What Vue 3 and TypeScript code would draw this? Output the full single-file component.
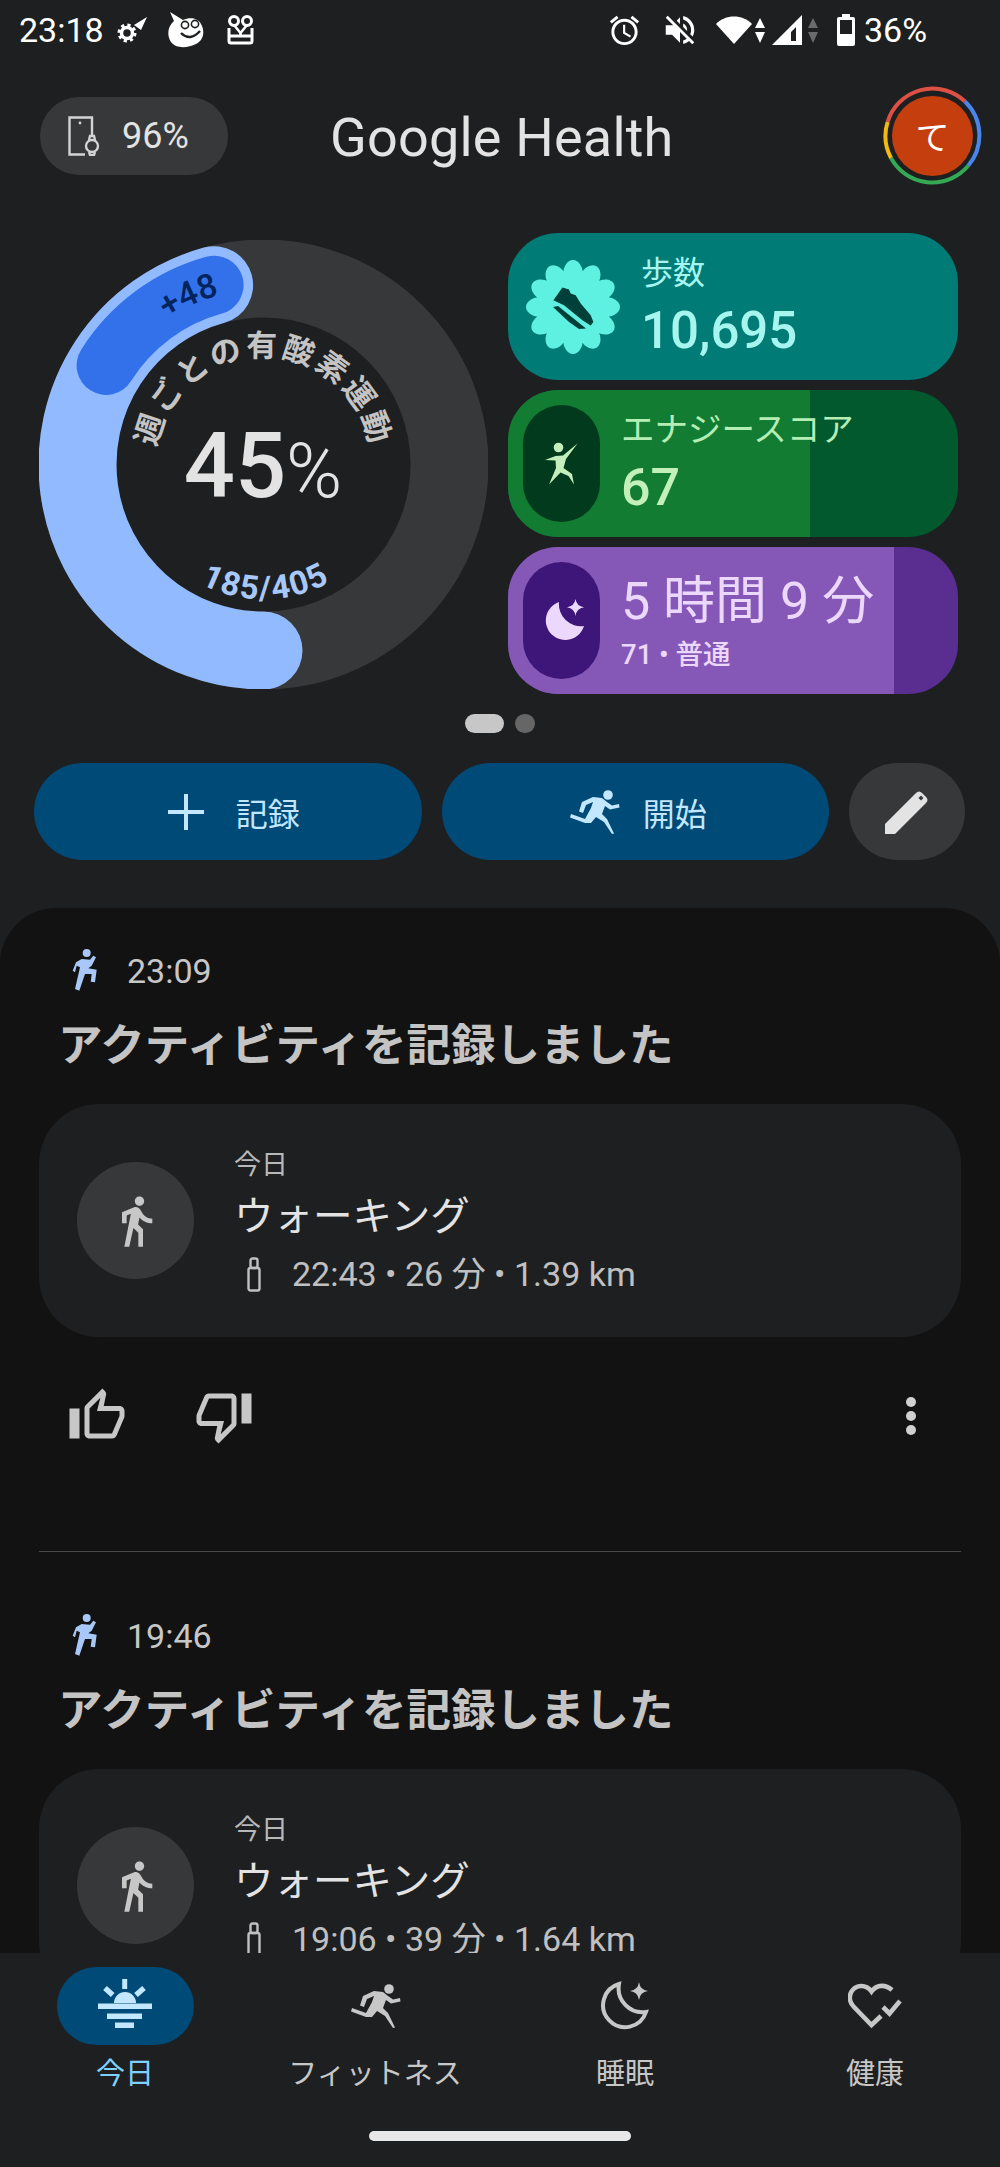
<script setup lang="ts">
interface Entry {
  id: number
  time: string
  detail: string
}

const entries: Entry[] = [
  { id: 1, time: '23:09', detail: '22:43 • 26 分 • 1.39 km' },
  { id: 2, time: '19:46', detail: '19:06 • 39 分 • 1.64 km' },
]

// runner used on the start button and the fitness tab (51x44 box)
const RUN =
  'M24 7 L33 8 L38 12 L43 15.5 L50 14 L50.5 17.5 L41 19.5 L36 16 L33 24 L38 29 L45 43.5 L43 44 L35 32 L27 27 L22 33 L16 33 L1 27.5 L2 24 L16 29 L22 18 L24 12 L17 15 L14 23 L10 21.5 L13 12 Z'

// ring geometry, angles in degrees clockwise from the top
const C = 224.5
const pt = (r: number, deg: number) => {
  const a = (deg * Math.PI) / 180
  return `${(C + r * Math.sin(a)).toFixed(2)} ${(C - r * Math.cos(a)).toFixed(2)}`
}
const arc = (r: number, from: number, to: number) => {
  const large = Math.abs(to - from) > 180 ? 1 : 0
  const sweep = to > from ? 1 : 0
  return `M${pt(r, from)} A${r} ${r} 0 ${large} ${sweep} ${pt(r, to)}`
}

const goalArc = arc(186, 180, 344.6)
const extraArc = arc(186, 302.2, 344.6)
const titlePath = arc(108, -100, 100)
const extraPath = arc(175, -94, 46)
const countPath = arc(135, 259, 99)

// scalloped badge behind the shoe
const badge = (() => {
  const pts: string[] = []
  for (let i = 0; i < 240; i++) {
    const t = (i / 240) * Math.PI * 2
    const r = 37 + 10 * Math.pow(Math.abs(Math.cos(6 * t)), 0.8)
    pts.push(`${(47 + r * Math.sin(t)).toFixed(2)} ${(47 - r * Math.cos(t)).toFixed(2)}`)
  }
  return 'M' + pts.join('L') + 'Z'
})()
</script>

<template>
  <div class="screen">
    <div class="status">
      <span class="status-time">23:18</span>
      <svg class="s-gear" width="30" height="26" viewBox="0 0 30 26">
        <path d="M17 8 L30 0 L24 13 Z" fill="#fff" />
        <circle cx="10" cy="16" r="5.5" fill="none" stroke="#fff" stroke-width="3.5" />
        <circle cx="10" cy="16" r="8" fill="none" stroke="#fff" stroke-width="3" stroke-dasharray="3.2 3.1" />
      </svg>
      <svg class="s-slime" width="36" height="36" viewBox="0 0 36 36">
        <path d="M2 0 L15 8 C22 5 30 6 33 12 C37 19 36 28 28 32 C20 36 8 37 3 30 C-1 24 -1 15 6 9 Z" fill="#fff" />
        <circle cx="17" cy="13" r="3.6" fill="none" stroke="#1e1f20" stroke-width="1.6" />
        <circle cx="27" cy="12" r="3.6" fill="none" stroke="#1e1f20" stroke-width="1.6" />
        <path d="M13 21 Q22 30 32 19" fill="none" stroke="#1e1f20" stroke-width="2.4" />
      </svg>
      <svg class="s-bunny" width="29" height="30" viewBox="0 0 29 30">
        <circle cx="8" cy="6" r="4.5" fill="none" stroke="#fff" stroke-width="3" />
        <circle cx="21" cy="6" r="4.5" fill="none" stroke="#fff" stroke-width="3" />
        <path d="M8 10 L14.5 18 L21 10 M14.5 18 V22" fill="none" stroke="#fff" stroke-width="2.6" />
        <path d="M3 13 V26 Q3 28 5 28 H24 Q26 28 26 26 V13 M3 21 H26" fill="none" stroke="#fff" stroke-width="3" />
      </svg>
      <svg class="s-alarm" width="35" height="35" viewBox="0 0 24 24" fill="#fff">
        <path d="M22 5.72l-4.6-3.86-1.29 1.53 4.6 3.86L22 5.72zM7.88 3.39L6.6 1.86 2 5.71l1.29 1.53 4.59-3.85zM12.5 8H11v6l4.75 2.85.75-1.23-4-2.37V8zM12 4c-4.97 0-9 4.03-9 9s4.03 9 9 9 9-4.03 9-9-4.03-9-9-9zm0 16c-3.87 0-7-3.13-7-7s3.13-7 7-7 7 3.13 7 7-3.13 7-7 7z" />
      </svg>
      <svg class="s-mute" width="38" height="38" viewBox="0 0 24 24" fill="#fff">
        <path d="M16.5 12c0-1.77-1.02-3.29-2.5-4.03v2.21l2.45 2.45c.03-.2.05-.41.05-.63zm2.5 0c0 .94-.2 1.82-.54 2.64l1.51 1.51C20.63 14.91 21 13.5 21 12c0-4.28-2.99-7.86-7-8.77v2.06c2.89.86 5 3.54 5 6.71zM4.27 3L3 4.27 7.73 9H3v6h4l5 5v-6.73l4.25 4.25c-.67.52-1.42.93-2.25 1.18v2.06c1.38-.31 2.63-.95 3.69-1.81L19.73 21 21 19.73l-9-9L4.27 3zM12 4L9.91 6.09 12 8.18V4z" />
      </svg>
      <svg class="s-wifi" width="36" height="30" viewBox="0 0 36 30">
        <path d="M18 29 L0 9 C9 -1 27 -1 36 9 Z" fill="#fff" />
      </svg>
      <svg class="s-arrows" width="10" height="28" viewBox="0 0 10 28">
        <path d="M5 2 L10 12 H0 Z M5 27 L0 16 H10 Z" fill="#fff" />
      </svg>
      <svg class="s-signal" width="30" height="30" viewBox="0 0 30 30">
        <path d="M0 30 L30 0 V30 Z M24 12 L19 17 V26 H24 Z" fill="#fff" fill-rule="evenodd" />
      </svg>
      <svg class="s-arrows2" width="10" height="28" viewBox="0 0 10 28">
        <path d="M5 2 L10 12 H0 Z M5 27 L0 16 H10 Z" fill="#6a6b6c" />
      </svg>
      <svg class="s-battery" width="18" height="32" viewBox="0 0 18 32">
        <path d="M5 0 H13 V3 H16 Q18 3 18 5 V30 Q18 32 16 32 H2 Q0 32 0 30 V5 Q0 3 2 3 H5 Z M3 6 V20 H15 V6 Z" fill="#fff" fill-rule="evenodd" />
      </svg>
      <span class="status-pct">36%</span>
    </div>

    <header class="top">
      <div class="device-pill">
        <svg width="32" height="40" viewBox="0 0 32 40" fill="none" stroke="#d4d4d4" stroke-width="2.4">
          <path d="M17 38.5 H1.5 V1.5 H24 V20" />
          <circle cx="12" cy="7" r="1.4" fill="#d4d4d4" stroke="none" />
          <circle cx="24" cy="30" r="6" />
          <path d="M21 24 L22 20 H26 L27 24 M21 36 L22 39 H26 L27 36" />
        </svg>
        <span>96%</span>
      </div>
      <h1 class="app-title">Google Health</h1>
      <div class="top-right">
        <div class="avatar-wrap">
          <svg class="avatar-ring" width="99" height="99" viewBox="0 0 99 99" fill="none" stroke-width="4">
            <path d="M4.6 36 A47 47 0 0 1 82 15.5" stroke="#dd5144" />
            <path d="M82 15.5 A47 47 0 0 1 85 80" stroke="#4a86e8" />
            <path d="M85 80 A47 47 0 0 1 8 72" stroke="#34a853" />
            <path d="M8 72 A47 47 0 0 1 4.6 36" stroke="#f2b90f" />
          </svg>
          <div class="avatar">て</div>
        </div>
      </div>
    </header>

    <section class="hero">
      <svg class="ring" width="449" height="449" viewBox="0 0 449 449" fill="none">
        <circle :cx="C" :cy="C" r="186" stroke="#37383a" stroke-width="78" />
        <path :d="goalArc" stroke="#92bbff" stroke-width="78" stroke-linecap="round" />
        <path :d="extraArc" stroke="#3371ea" stroke-width="59" stroke-linecap="round" />
        <path id="ring-title" :d="titlePath" />
        <path id="ring-extra" :d="extraPath" />
        <path id="ring-count" :d="countPath" />
        <text class="ring-title">
          <textPath href="#ring-title" startOffset="50%" text-anchor="middle">週ごとの有酸素運動</textPath>
        </text>
        <text class="ring-extra">
          <textPath href="#ring-extra" startOffset="50%" text-anchor="middle">+48</textPath>
        </text>
        <text class="ring-count">
          <textPath href="#ring-count" startOffset="50%" text-anchor="middle">185/405</textPath>
        </text>
        <text class="ring-pct" x="224" y="257" text-anchor="middle">45<tspan class="ring-pct-sign">%</tspan></text>
      </svg>

      <div class="cards">
        <div class="card steps">
          <svg class="steps-badge" width="94" height="94" viewBox="0 0 94 94">
            <path :d="badge" fill="#5ef0e0" />
            <path d="M27.4 40.3 L36.4 27.6 L43 29.6 L44.7 33.6 L49.7 35.3 L54.7 43.6 L64.7 55.3 L67.4 62 L64.7 65.6 L56.4 60.3 L38 45.3 Z" fill="#00403b" />
            <path d="M27 47 L32 46 L60 68.6 L53 69 L43 62 Z" fill="#00403b" />
          </svg>
          <div class="card-text steps-text">
            <span class="steps-label">歩数</span>
            <span class="steps-value">10,695</span>
          </div>
        </div>

        <div class="card energy">
          <div class="card-fill energy-fill"></div>
          <div class="icon-pill energy-pill">
            <svg width="50" height="50" viewBox="0 0 50 50" fill="#c4efbc">
              <circle cx="21.5" cy="8.5" r="4.8" />
              <path d="M8 21 L18.5 17 L26 16.5 L40.5 4.5 L29 20 L26.5 29 L35 35 L37 45.5 L31.5 37 L23.5 33.5 L12 45.5 L19 29 L18.5 21.5 Z" />
            </svg>
          </div>
          <div class="card-text">
            <span class="energy-label">エナジースコア</span>
            <span class="energy-value">67</span>
          </div>
        </div>

        <div class="card sleep">
          <div class="card-fill sleep-fill"></div>
          <div class="icon-pill sleep-pill">
            <svg width="50" height="50" viewBox="0 0 50 50" fill="#ecd8fc">
              <path d="M22 6 A19.5 19.5 0 1 0 47 30 A22 22 0 0 1 22 6 Z" />
              <path d="M38.5 3 Q39.5 10 47 11.3 Q39.5 12.5 38.5 20 Q37.5 12.5 30 11.3 Q37.5 10 38.5 3 Z" />
            </svg>
          </div>
          <div class="card-text">
            <span class="sleep-value">5 時間 9 分</span>
            <span class="sleep-sub">71 • 普通</span>
          </div>
        </div>
      </div>
    </section>

    <div class="dots">
      <span class="dot-on"></span>
      <span class="dot-off"></span>
    </div>

    <div class="actions">
      <button class="action record">
        <svg width="36" height="36" viewBox="0 0 36 36" fill="#c2e7ff">
          <path d="M16 0 H20 V16 H36 V20 H20 V36 H16 V20 H0 V16 H16 Z" />
        </svg>
        <span>記録</span>
      </button>
      <button class="action start">
        <svg width="51" height="44" viewBox="0 0 51 44" fill="#c2e7ff">
          <circle cx="39" cy="5" r="4.8" />
          <path :d="RUN" />
        </svg>
        <span>開始</span>
      </button>
      <button class="action edit">
        <svg width="44" height="44" viewBox="0 0 44 44" fill="#e3e3e3">
          <path d="M0 44 V34 L31 3 Q34 0 37 3 L41 7 Q44 10 41 13 L10 44 Z M36 5.5 L33.5 8 L36 10.5 L38.5 8 Z" fill-rule="evenodd" />
        </svg>
      </button>
    </div>

    <main class="sheet">
      <article v-for="entry in entries" :key="entry.id" class="entry">
        <div class="entry-head">
          <svg width="30" height="44" viewBox="0 0 30 44" fill="#a8c8fa">
            <circle cx="17.7" cy="4" r="4" />
            <path d="M3.7 21.7 L7 13.3 L12.7 10 L21 10.7 L24.3 6.7 L27 8.3 L22.7 16.7 L19.3 19.3 L27.7 20.7 L26 33.3 L21.7 32.7 L22.7 25 L16 25 L10.3 41.7 L6 40 L11 18.3 L7.7 16.7 L6 23.3 Z" />
          </svg>
          <span>{{ entry.time }}</span>
        </div>
        <h2 class="entry-title">アクティビティを記録しました</h2>
        <div class="activity">
          <div class="activity-icon">
            <svg width="56" height="56" viewBox="0 0 24 24" fill="#c7c7c7">
              <path d="M13.5 5.5c1.1 0 2-.9 2-2s-.9-2-2-2-2 .9-2 2 .9 2 2 2zM9.8 8.9L7 23h2.1l1.8-8 2.1 2v6h2v-7.5l-2.1-2 .6-3C14.8 12 16.8 13 19 13v-2c-1.9 0-3.5-1-4.3-2.4l-1-1.6c-.4-.6-1-1-1.7-1-.3 0-.5.1-.8.1L6 8.3V13h2V9.6l1.8-.7" />
            </svg>
          </div>
          <div class="activity-text">
            <span class="activity-day">今日</span>
            <span class="activity-name">ウォーキング</span>
            <span class="activity-detail">
              <svg width="14" height="35" viewBox="0 0 14 35" fill="none" stroke="#c0c0c0" stroke-width="2.4">
                <rect x="1.5" y="11" width="11" height="22.5" rx="2" />
                <rect x="3.5" y="1.5" width="7" height="9.5" rx="2" />
              </svg>
              {{ entry.detail }}
            </span>
          </div>
        </div>
        <div class="feedback">
          <svg width="60" height="60" viewBox="0 0 24 24" fill="#c7c7c7">
            <path d="M9 21h9c.83 0 1.54-.5 1.84-1.22l3.02-7.05c.09-.23.14-.47.14-.73v-2c0-1.1-.9-2-2-2h-6.31l.95-4.57.03-.32c0-.41-.17-.79-.44-1.06L14.17 1 7.58 7.59C7.22 7.95 7 8.45 7 9v10c0 1.1.9 2 2 2zM9 9l4.34-4.34L12 10h9v2l-3 7H9V9zM1 9h4v12H1z" />
          </svg>
          <svg width="60" height="60" viewBox="0 0 24 24" fill="#c7c7c7">
            <path d="M15 3H6c-.83 0-1.54.5-1.84 1.22l-3.02 7.05c-.09.23-.14.47-.14.73v2c0 1.1.9 2 2 2h6.31l-.95 4.57-.03.32c0 .41.17.79.44 1.06L9.83 23l6.59-6.59c.36-.36.58-.86.58-1.41V5c0-1.1-.9-2-2-2zm0 12l-4.34 4.34L12 14H3v-2l3-7h9v10zm4-12h4v12h-4z" />
          </svg>
          <svg class="more" width="60" height="60" viewBox="0 0 60 60" fill="#d0d0d0">
            <circle cx="30" cy="16" r="5" />
            <circle cx="30" cy="30" r="5" />
            <circle cx="30" cy="44" r="5" />
          </svg>
        </div>
        <hr class="divider" />
      </article>
    </main>

    <nav class="nav">
      <div class="nav-items">
        <div class="nav-item active">
          <div class="nav-icon">
            <svg width="54" height="54" viewBox="0 0 54 54" fill="#c2e7ff">
              <rect x="24.2" y="0" width="5" height="10" />
              <path d="M7 9 L14.7 16 M46 9 L38 16" stroke="#c2e7ff" stroke-width="5.5" />
              <path d="M16 24 A11 11 0 0 1 38 24 Z" />
              <rect x="0" y="24.5" width="54" height="5.5" />
              <rect x="9" y="34.5" width="35" height="5.5" />
              <rect x="17" y="43.5" width="19" height="5.5" />
            </svg>
          </div>
          <span>今日</span>
        </div>
        <div class="nav-item">
          <div class="nav-icon">
            <svg width="51" height="44" viewBox="0 0 51 44" fill="#c7c7c7">
              <circle cx="39" cy="5" r="4.8" />
              <path :d="RUN" />
            </svg>
          </div>
          <span>フィットネス</span>
        </div>
        <div class="nav-item">
          <div class="nav-icon">
            <svg width="50" height="50" viewBox="0 0 50 50">
              <path d="M19 3 A22 22 0 1 0 46 31 A24 24 0 0 1 19 3 Z" fill="none" stroke="#c7c7c7" stroke-width="4" />
              <path d="M39 1 Q40 9 48 10 Q40 11 39 19 Q38 11 30 10 Q38 9 39 1 Z" fill="#c7c7c7" />
            </svg>
          </div>
          <span>睡眠</span>
        </div>
        <div class="nav-item">
          <div class="nav-icon">
            <svg width="54" height="46" viewBox="0 0 54 46" fill="none" stroke="#c7c7c7" stroke-width="4.6">
              <path d="M33 33 L23.5 42 L6 24 C1 19 1 13 3.5 8.5 C8 1.5 18 1 23.5 8.5 C29 1 38 1.5 44 7" />
              <path d="M35 24 L41.5 30.5 L52 18" />
            </svg>
          </div>
          <span>健康</span>
        </div>
      </div>
      <div class="home-bar"></div>
    </nav>
  </div>
</template>

<style>
html,
body {
  background: #1e1f20;
}
</style>

<style scoped>
.screen {
  width: 1000px;
  height: 100vh;
  display: flex;
  flex-direction: column;
  overflow: hidden;
  background: #1e1f20;
  font-family: Roboto, 'Noto Sans CJK JP', sans-serif;
  color: #e3e3e3;
}

/* status bar */
.status {
  height: 60px;
  flex: none;
  display: flex;
  align-items: center;
  padding-left: 19px;
  color: #fff;
  font-size: 34px;
}
.status-time {
  width: 85px;
}
.s-gear {
  margin-left: 13px;
}
.s-slime {
  margin-left: 21px;
}
.s-bunny {
  margin-left: 22px;
}
.s-alarm {
  margin-left: 352px;
}
.s-mute {
  margin-left: 19px;
}
.s-wifi {
  margin-left: 17px;
}
.s-arrows {
  margin-left: 3px;
}
.s-signal {
  margin-left: 7px;
}
.s-arrows2 {
  margin-left: 6px;
}
.s-battery {
  margin-left: 19px;
}
.status-pct {
  margin-left: 9px;
}

/* header */
.top {
  flex: none;
  height: 99px;
  margin-top: 26px;
  padding: 0 18px 0 40px;
  display: grid;
  grid-template-columns: 290px auto 1fr;
  align-items: center;
}
.top-right {
  display: flex;
  justify-content: flex-end;
}
.device-pill {
  width: 188px;
  height: 78px;
  border-radius: 39px;
  background: #37383a;
  display: flex;
  align-items: center;
  gap: 22px;
  padding-left: 28px;
  box-sizing: border-box;
  font-size: 36px;
  font-weight: 400;
}
.app-title {
  margin: 0;
  padding-top: 3px;
  font-size: 54px;
  font-weight: 400;
  letter-spacing: 0.2px;
  color: #e3e3e3;
}
.avatar-wrap {
  position: relative;
  width: 99px;
  height: 99px;
  display: flex;
  align-items: center;
  justify-content: center;
}
.avatar-ring {
  position: absolute;
  inset: 0;
}
.avatar {
  width: 81px;
  height: 80px;
  border-radius: 50%;
  background: #c43e0e;
  color: #fff;
  display: flex;
  align-items: center;
  justify-content: center;
  font-size: 34px;
}

/* hero */
.hero {
  flex: none;
  margin-top: 48px;
  padding: 0 42px 0 39px;
  display: flex;
  gap: 20px;
}
.ring {
  flex: none;
  margin-top: 7px;
}
.ring-title {
  font-family: 'Noto Sans CJK JP', sans-serif;
  font-size: 31px;
  font-weight: 700;
  letter-spacing: 3px;
  fill: #c4c4c4;
}
.ring-extra {
  font-size: 34px;
  font-weight: 500;
  fill: #04245e;
}
.ring-count {
  font-size: 33px;
  font-weight: 700;
  letter-spacing: 1.5px;
  fill: #a8c8fa;
}
.ring-pct {
  font-size: 90px;
  font-weight: 500;
  fill: #e3e3e3;
}
.ring-pct-sign {
  font-weight: 300;
  font-size: 76px;
}
.cards {
  flex: 1;
  display: flex;
  flex-direction: column;
  gap: 10px;
}
.card {
  position: relative;
  height: 147px;
  border-radius: 50px;
  overflow: hidden;
  display: flex;
  align-items: center;
  padding-left: 15px;
  gap: 21px;
}
.card-fill {
  position: absolute;
  top: 0;
  bottom: 0;
  left: 0;
}
.card-text {
  position: relative;
  display: flex;
  flex-direction: column;
}
.icon-pill {
  position: relative;
  width: 77px;
  height: 117px;
  border-radius: 39px;
  flex: none;
  display: flex;
  align-items: center;
  justify-content: center;
}
.steps {
  background: #017b76;
  padding-left: 18px;
  gap: 21px;
}
.steps-badge {
  flex: none;
}
.steps-text {
  color: #a6f5ee;
}
.steps-label {
  font-size: 32px;
  line-height: 42px;
}
.steps-value {
  margin-top: 7px;
  font-size: 51px;
  line-height: 60px;
  font-weight: 500;
}
.energy {
  background: #02592d;
}
.energy-fill {
  width: 302px;
  background: #137c33;
}
.energy-pill {
  background: #013a1c;
}
.energy-label {
  font-size: 33.5px;
  line-height: 44px;
  color: #b5eeb5;
}
.energy-value {
  margin-top: 5px;
  font-size: 52px;
  line-height: 62px;
  font-weight: 500;
  color: #c2f0b8;
}
.sleep {
  background: #5a2d90;
}
.sleep-fill {
  width: 386px;
  background: #8558b8;
}
.sleep-pill {
  background: #3e1578;
}
.sleep-value {
  font-size: 52px;
  line-height: 68px;
  color: #ecd8fc;
}
.sleep-sub {
  font-size: 27.5px;
  line-height: 38px;
  font-weight: 500;
  color: #ecd8fc;
}

/* pager */
.dots {
  flex: none;
  margin-top: 20px;
  display: flex;
  justify-content: center;
  gap: 11px;
}
.dot-on {
  width: 39px;
  height: 19px;
  border-radius: 10px;
  background: #c7c7c7;
}
.dot-off {
  width: 20px;
  height: 19px;
  border-radius: 10px;
  background: #666;
}

/* buttons */
.actions {
  flex: none;
  margin-top: 30px;
  padding: 0 35px 0 34px;
  display: flex;
  gap: 20px;
}
.action {
  height: 97px;
  padding: 0;
  border: none;
  border-radius: 49px;
  display: flex;
  align-items: center;
  justify-content: center;
  background: #004a77;
  color: #c2e7ff;
  font-family: 'Noto Sans CJK JP', sans-serif;
  font-size: 32px;
}
.record {
  flex: 1 1 0;
  gap: 32px;
}
.record svg {
  margin-left: 12px;
}
.start {
  flex: 1 1 0;
  gap: 23px;
}
.start svg {
  margin-left: 5px;
}
.edit {
  width: 116px;
  flex: none;
  background: #37383a;
}

/* feed */
.sheet {
  flex: 1;
  min-height: 0;
  margin-top: 48px;
  padding: 0 39px;
  overflow: hidden;
  border-radius: 56px 56px 0 0;
  background: #121212;
}
.entry {
  padding-top: 41px;
}
.entry-head {
  height: 44px;
  padding-left: 30px;
  display: flex;
  align-items: center;
  gap: 28px;
  font-size: 34px;
  color: #c7c7c7;
}
.entry-title {
  margin: 24px 0 0;
  padding-left: 19px;
  font-family: 'Noto Sans CJK JP', sans-serif;
  font-size: 44.5px;
  line-height: 50px;
  font-weight: 700;
  color: #c4c4c4;
}
.activity {
  margin-top: 37px;
  height: 233px;
  border-radius: 60px;
  background: #1e1f20;
  display: flex;
  align-items: center;
  padding-left: 38px;
  gap: 40px;
}
.activity-icon {
  width: 117px;
  height: 117px;
  border-radius: 50%;
  background: #37383a;
  flex: none;
  display: flex;
  align-items: center;
  justify-content: center;
}
.activity-text {
  display: flex;
  flex-direction: column;
}
.activity-day {
  font-size: 27px;
  line-height: 36px;
  color: #b8b8b8;
}
.activity-name {
  margin-top: 12px;
  font-size: 39.5px;
  line-height: 44px;
  color: #e3e3e3;
}
.activity-detail {
  margin-top: 15px;
  height: 40px;
  display: flex;
  align-items: center;
  gap: 31px;
  padding-left: 13px;
  font-size: 34px;
  line-height: 28px;
  color: #c0c0c0;
}
.feedback {
  margin-top: 49px;
  padding: 0 20px 0 28px;
  display: flex;
  gap: 67px;
}
.more {
  margin-left: auto;
}
.divider {
  margin: 105px 0 21px;
  border: none;
  border-top: 1px solid #4a4a4a;
}

/* bottom nav */
.nav {
  flex: none;
  height: 214px;
  padding-top: 14px;
  box-sizing: border-box;
  display: flex;
  flex-direction: column;
  background: #1e1f20;
}
.nav-items {
  display: grid;
  grid-template-columns: repeat(4, 1fr);
}
.nav-item {
  display: flex;
  flex-direction: column;
  align-items: center;
  font-size: 29px;
  line-height: 40px;
  color: #c7c7c7;
}
.nav-icon {
  width: 137px;
  height: 78px;
  margin-bottom: 9px;
  border-radius: 39px;
  display: flex;
  align-items: center;
  justify-content: center;
}
.active {
  color: #7fcfff;
}
.active .nav-icon {
  background: #004a77;
}
.home-bar {
  width: 262px;
  height: 10px;
  margin: 37px auto 0;
  border-radius: 5px;
  background: #e8e8e8;
}
</style>
